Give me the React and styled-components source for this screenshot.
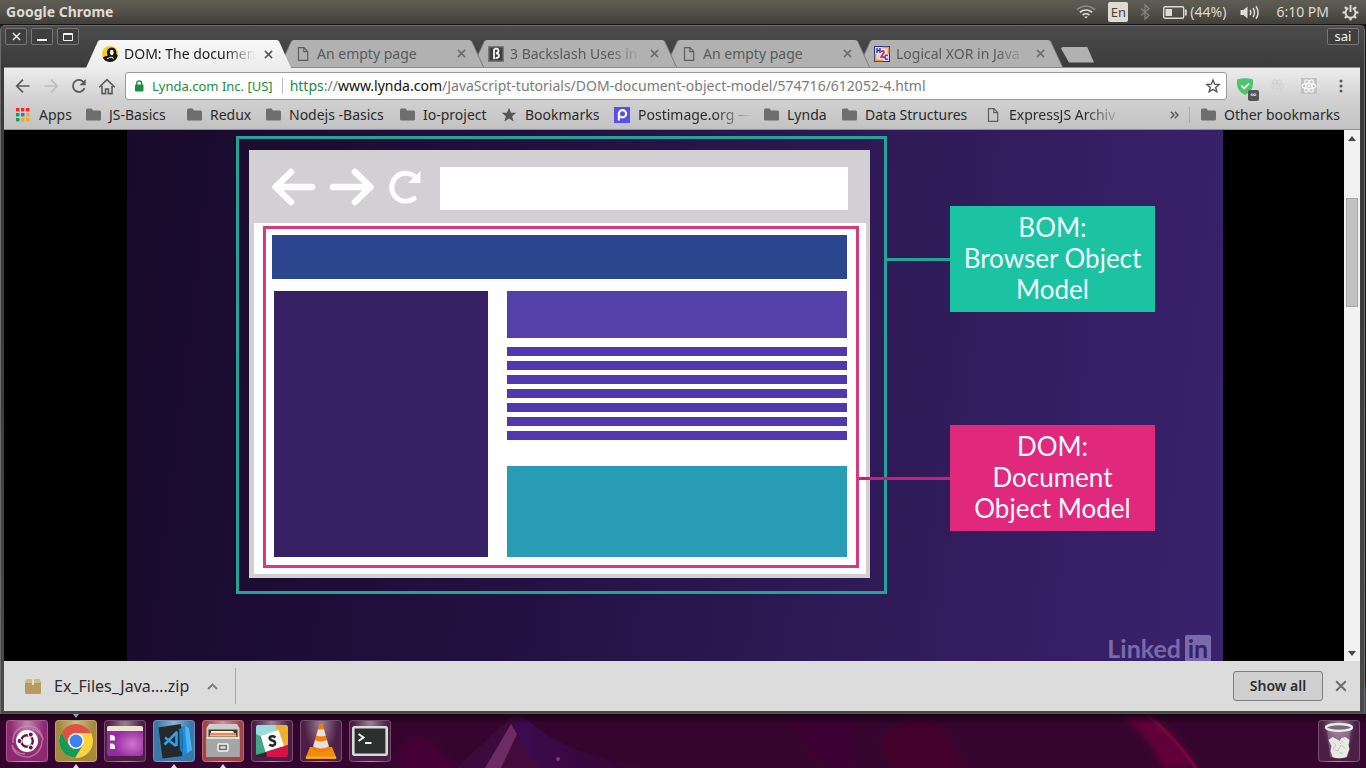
import React from "react";
import styled, { createGlobalStyle, css } from "styled-components";

const GlobalStyle = createGlobalStyle`
  *, *::before, *::after { box-sizing: border-box; }
  html, body { margin: 0; padding: 0; height: 100%; overflow: hidden; background: #37042f; }
  body { font-family: "Noto Sans", "Open Sans", sans-serif; font-size: 14px; line-height: 20px; color: #2d2d2d; }
  button, input { font: inherit; margin: 0; padding: 0; border: 0; background: none; color: inherit; outline: 0; }
  a { color: inherit; text-decoration: none; }
  svg { display: block; flex: none; }
`;

const Desktop = styled.div`
  display: flex;
  flex-direction: column;
  height: 100vh;
`;

/* ---------- system panel ---------- */

const Panel = styled.header`
  display: flex;
  align-items: center;
  justify-content: space-between;
  flex: none;
  height: 24px;
  padding: 0 7px 0 6px;
  background: linear-gradient(#5f5d53, #55534b 40%, #403f3a);
  color: #dfdbd2;
`;

const PanelTitle = styled.strong`
  font-weight: 700;
`;

const Indicators = styled.div`
  display: flex;
  align-items: center;
`;

const Indicator = styled.div`
  display: flex;
  align-items: center;
  gap: 3px;
  margin-left: ${(p) => p.$gap}px;
  white-space: nowrap;
`;

const Language = styled.span`
  width: 20px;
  height: 20px;
  border-radius: 2px;
  background: #dfdbd2;
  color: #45433d;
  font-size: 13px;
  text-align: center;
`;

/* ---------- browser window ---------- */

const Stage = styled.div`
  display: flex;
  flex: 1;
  min-height: 0;
  padding-right: 1px;
  background: linear-gradient(#161616 0, #161616 95%, #0a5c95 97%);
`;

const Window = styled.main`
  display: flex;
  flex-direction: column;
  flex: 1;
  min-width: 0;
  margin-top: 1px;
  padding: 0 4px 2px 3px;
  border: 1px solid #6b6b6b;
  border-bottom-color: #55505a;
  border-radius: 5px 5px 0 0;
  background: linear-gradient(#4c4c4c, #3b3b3b 40px, #3b3b3b 300px, #4a4a4a);
`;

const TabStrip = styled.div`
  display: flex;
  flex: none;
  height: 42px;
  border-bottom: 1px solid #8a8a8a;
`;

const Controls = styled.div`
  display: flex;
  gap: 4px;
  padding: 2px ${(p) => (p.$end ? 1 : 7)}px 0 1px;
`;

const FrameButton = styled.button`
  display: flex;
  align-items: center;
  justify-content: center;
  width: ${(p) => p.$w || 22}px;
  height: 17px;
  border: 1px solid #777;
  border-radius: 2px;
  background: #3f3f3f;
  color: #f2f2f2;
  font-size: 13px;
  line-height: 15px;
`;

const Tabs = styled.nav`
  display: flex;
  flex: 1;
  align-items: flex-end;
  min-width: 0;
`;

const tabShape = css`
  content: "";
  position: absolute;
  inset: 0;
  clip-path: polygon(0 100%, 12px 1px, 14px 0, calc(100% - 14px) 0, calc(100% - 12px) 1px, 100% 100%);
`;

const Tab = styled.div`
  position: relative;
  z-index: ${(p) => p.$z};
  display: flex;
  align-items: center;
  flex: none;
  width: 205px;
  height: ${(p) => (p.$active ? 28 : 27)}px;
  margin-right: -12px;
  margin-bottom: ${(p) => (p.$active ? -1 : 0)}px;
  padding: 0 18px 0 16px;
  color: ${(p) => (p.$active ? "#1c1c1c" : "#5a5a5a")};

  &::before {
    ${tabShape}
    background: ${(p) => (p.$active ? "#f2f2f2" : "#7d7d7d")};
  }
  &::after {
    ${tabShape}
    left: 1px;
    right: 1px;
    background: ${(p) => (p.$active ? "linear-gradient(#f7f7f7, #ededed)" : "#b1b1b1")};
  }
  > * {
    position: relative;
    z-index: 1;
  }
`;

const TabTitle = styled.a`
  flex: 1;
  min-width: 0;
  margin: 0 8px 0 6px;
  overflow: hidden;
  white-space: nowrap;
  ${(p) =>
    p.$fade &&
    css`
      mask-image: linear-gradient(to right, #000 calc(100% - 32px), transparent);
    `}
`;

const IconButton = styled.button`
  display: flex;
  align-items: center;
  justify-content: center;
  flex: none;
  width: ${(p) => p.$size}px;
  height: ${(p) => p.$size}px;
  color: ${(p) => p.$color || "#5a5a5a"};
`;

const NewTab = styled.button`
  align-self: center;
  width: 33px;
  height: 16px;
  margin: 16px 0 0 10px;
  background: #b1b1b1;
  clip-path: polygon(0 2px, 2px 0, 26px 0, 100% 100%, 8px 100%);
`;

const Chrome = styled.div`
  flex: none;
  border-bottom: 1px solid #8f8f8f;
  background: linear-gradient(#ededed, #d2d2d2 50%, #c2c2c2);
`;

const Toolbar = styled.div`
  display: flex;
  align-items: center;
  height: 36px;
  padding: 0 3px 0 5px;
`;

const Address = styled.form`
  display: flex;
  align-items: center;
  flex: 1;
  min-width: 0;
  height: 28px;
  margin: 0 2px 0 4px;
  padding: 0 5px 0 8px;
  border: 1px solid #9b9b9b;
  border-radius: 3px;
  background: #fff;
  white-space: nowrap;
`;

const Identity = styled.span`
  margin: 0 7px 0 8px;
  padding-right: 9px;
  border-right: 1px solid #bdbdbd;
  color: #1c8c45;
  font-size: 13px;
  line-height: 16px;
`;

const UrlPart = styled.span`
  color: ${(p) => p.$color};
`;

const UrlInput = styled.input`
  flex: 1;
  min-width: 0;
  color: #7b7b7b;
`;

const Shield = styled.span`
  position: relative;
  display: flex;
`;

const Badge = styled.span`
  position: absolute;
  right: -6px;
  bottom: -6px;
  width: 11px;
  height: 11px;
  border-radius: 2px;
  background: #555;
  color: #fff;
  font-size: 9px;
  line-height: 10px;
  text-align: center;
`;

const Bookmarks = styled.nav`
  display: flex;
  align-items: center;
  height: 25px;
  padding: 0 16px 4px 11px;
`;

const Bookmark = styled.a`
  display: flex;
  align-items: center;
  flex: none;
  gap: 8px;
  width: ${(p) => p.$w}px;
  white-space: nowrap;
  color: #2b2b2b;

  span {
    ${(p) =>
      p.$fade &&
      css`
        width: 114px;
        overflow: hidden;
        mask-image: linear-gradient(to right, #000 calc(100% - 38px), transparent);
      `}
  }
`;

const IconSlot = styled.i`
  display: flex;
  justify-content: center;
  flex: none;
  width: 16px;
`;

const BookmarkEnd = styled.div`
  display: flex;
  align-items: center;
  gap: 10px;
  margin-left: auto;
`;

const Divider = styled.i`
  width: 1px;
  height: ${(p) => p.$h}px;
  background: #a9a9a9;
`;

/* ---------- page content ---------- */

const Viewport = styled.section`
  display: flex;
  flex: 1;
  min-height: 0;
  overflow: hidden;
  background: #000;
`;

const Player = styled.div`
  flex: 1;
  min-width: 0;
  padding: 0 121px 0 123px;
  overflow: hidden;
`;

const Slide = styled.div`
  position: relative;
  display: flex;
  justify-content: space-between;
  height: 616px;
  padding: 6px 68px 0 109px;
  background: linear-gradient(97deg, #180a2a, #221040 35%, #2e1a56 65%, #3b226e);
`;

const BomFrame = styled.div`
  width: 651px;
  height: 458px;
  padding: 11px 14px 13px 10px;
  border: 3px solid #22a596;
`;

const MockBrowser = styled.div`
  display: flex;
  flex-direction: column;
  height: 100%;
  padding: 0 4px 4px 5px;
  background: #d2d0d2;
`;

const MockBar = styled.div`
  display: flex;
  align-items: center;
  height: 73px;
  padding: 3px 18px 0 17px;
`;

const MockUrl = styled.div`
  flex: 1;
  height: 43px;
  margin-left: 13px;
  background: #fff;
`;

const MockPage = styled.div`
  flex: 1;
  padding: 3px 7px 6px 9px;
  background: #fff;
`;

const DomFrame = styled.div`
  display: flex;
  flex-direction: column;
  gap: 12px;
  height: 100%;
  padding: 6px 9px 8px 6px;
  border: 3px solid #d8397e;
`;

const MockHeader = styled.div`
  flex: none;
  height: 44px;
  background: #2b458f;
`;

const MockColumns = styled.div`
  display: flex;
  flex: 1;
  gap: 19px;
  padding-left: 2px;
`;

const MockAside = styled.div`
  width: 214px;
  background: #371f63;
`;

const MockArticle = styled.div`
  display: flex;
  flex-direction: column;
  flex: 1;
  justify-content: space-between;
`;

const MockBlock = styled.div`
  height: ${(p) => p.$h}px;
  background: ${(p) => p.$color};
`;

const MockLines = styled.div`
  display: grid;
  gap: 5px;
  margin-bottom: 18px;
`;

const Callouts = styled.div`
  display: flex;
  flex-direction: column;
  gap: 113px;
  width: 205px;
  padding-top: 70px;
`;

const Callout = styled.div`
  position: relative;
  height: 106px;
  padding-top: 6px;
  background: ${(p) => p.$color};
  color: #f1faff;
  font-family: Lato, sans-serif;
  font-size: 26px;
  line-height: 31px;
  text-align: center;

  &::before {
    content: "";
    position: absolute;
    top: 52px;
    right: 100%;
    width: ${(p) => p.$reach}px;
    height: 3px;
    background: ${(p) => p.$line};
  }
`;

const Watermark = styled.div`
  position: absolute;
  top: 505px;
  right: 12px;
  display: flex;
  align-items: center;
  gap: 4px;
  color: #7b6aa9;
  font-family: Lato, sans-serif;
  font-size: 25px;
  font-weight: 700;
  line-height: 27px;
`;

const WatermarkBox = styled.span`
  width: 26px;
  height: 27px;
  border-radius: 2px;
  background: #7b6aa9;
  color: #38206c;
  text-align: center;
`;

const Scrollbar = styled.div`
  display: flex;
  flex-direction: column;
  align-items: center;
  flex: none;
  width: 16px;
  padding: 6px 0 5px;
  background: #f1f1f1;
`;

const Thumb = styled.div`
  width: 12px;
  height: 109px;
  margin: 57px 0 auto;
  border: 1px solid #a8a8a8;
  background: #c1c1c1;
`;

/* ---------- downloads shelf ---------- */

const Shelf = styled.footer`
  display: flex;
  align-items: center;
  flex: none;
  height: 50px;
  padding: 0 12px 0 21px;
  background: #dcdcdc;
  font-size: 16px;
`;

const Download = styled.a`
  display: flex;
  align-items: center;
  gap: 13px;
  width: 164px;
  white-space: nowrap;
`;

const ShowAll = styled.button`
  width: 90px;
  height: 30px;
  margin-left: auto;
  margin-right: 11px;
  border: 1px solid #7e7e7e;
  border-radius: 3px;
  background: #cfcfcf;
  font-size: 14px;
  font-weight: 600;
`;

/* ---------- launcher ---------- */

const Dock = styled.nav`
  position: relative;
  display: flex;
  align-items: center;
  flex: none;
  gap: 7px;
  height: 54px;
  padding: 0 6px;
  overflow: hidden;
  background: #36052f;
`;

const Wallpaper = styled.svg`
  position: absolute;
  inset: 0;
  width: 100%;
  height: 100%;
`;

const Launcher = styled.button`
  position: relative;
  display: flex;
  align-items: center;
  justify-content: center;
  flex: none;
  width: 42px;
  height: 42px;
  border-radius: 4px;
  border: 1px solid rgba(255, 255, 255, 0.22);
  background: radial-gradient(ellipse at 50% 0, rgba(255, 255, 255, 0.45), transparent 60%), ${(p) => p.$bg || "rgba(120,80,115,.35)"};
  ${(p) => p.$last && "margin-left: auto;"}

  ${(p) =>
    p.$running &&
    css`
      &::after {
        content: "";
        position: absolute;
        left: 17px;
        bottom: -7px;
        border: 3px solid transparent;
        border-bottom: 4px solid #e2dfe2;
        border-top: 0;
      }
    `}
  ${(p) =>
    p.$focused &&
    css`
      &::before {
        content: "";
        position: absolute;
        left: 17px;
        top: -7px;
        border: 3px solid transparent;
        border-top: 4px solid #a49aa2;
        border-bottom: 0;
      }
    `}
`;

/* ---------- icons ---------- */

const Cross = ({ size = 10, weight = 1.5 }) => (
  <svg width={size} height={size} viewBox="0 0 10 10" stroke="currentColor" strokeWidth={weight}>
    <path d="M1 1l8 8M9 1L1 9" />
  </svg>
);

const Folder = () => (
  <svg width="15" height="13" viewBox="0 0 15 13">
    <path d="M1.500 .5h4l1.500 2h6.500q1.500 0 1.500 1.500v7q0 1.500-1.500 1.500h-12Q0 12.500 0 11V2Q0 .5 1.500 .5z" fill="#6e6e6e" />
  </svg>
);

const PageIcon = () => (
  <svg width="16" height="16" viewBox="0 0 16 16" fill="none" stroke="#5e5e5e" strokeWidth="1.200">
    <path d="M3.500 1.700h5.500l3.700 3.700v8.900h-9.200zM8.800 2v3.600h3.600" />
  </svg>
);

const AppsIcon = () => (
  <svg width="14" height="14" viewBox="0 0 14 14">
    {["#f22", "#f22", "#f22", "#1a9c4c", "#3f6de8", "#f7a91e", "#1a9c4c", "#f7a91e", "#f7a91e"].map((c, i) => (
      <rect key={i} x={(i % 3) * 5} y={Math.floor(i / 3) * 5} width="3.400" height="3.400" fill={c} />
    ))}
  </svg>
);

const StarSolid = () => (
  <svg width="16" height="16" viewBox="0 0 16 16">
    <path d="M8 .8l2 5h5.300l-4.200 3.400 1.500 5.300L8 11.400l-4.600 3.100 1.500-5.300L.7 5.800H6z" fill="#555" />
  </svg>
);

const StarOutline = () => (
  <svg width="16" height="16" viewBox="0 0 16 16" fill="none" stroke="#555" strokeWidth="1.400">
    <path d="M8 2l1.700 4.200 4.400.3-3.400 2.900 1.100 4.400L8 11.400l-3.800 2.400 1.100-4.400L1.900 6.500l4.400-.3z" />
  </svg>
);

const PostIcon = () => (
  <svg width="16" height="16" viewBox="0 0 16 16">
    <rect width="16" height="16" fill="#5450e8" />
    <circle cx="8.500" cy="6.800" r="3.600" fill="none" stroke="#fff" strokeWidth="2.200" />
    <path d="M3.800 6.500h2.200v7h-2.200z" fill="#fff" />
  </svg>
);

const LyndaIcon = () => (
  <svg width="16" height="16" viewBox="0 0 16 16">
    <circle cx="8" cy="8" r="8" fill="#f5cf1c" />
    <path d="M.8 11.500q3-2 5-1.700Q4 6 6 3.300q2.500-2.800 6-1.300 3 2.500 2.300 6l1.400 1.600Q14.500 16 8 16 2.500 15.500 .8 11.500z" fill="#17150f" />
    <path d="M8.200 4.500Q9.800 3 11.300 4.500q.8 2-.3 4.200-1.700 1.300-2.700-.5-.9-2-.1-3.700z" fill="#fff7e5" />
    <path d="M5 12.800q3-2 5.500-1.600l.8 2" stroke="#eee" fill="none" />
  </svg>
);

const BackslashIcon = () => (
  <svg width="16" height="16" viewBox="0 0 16 16">
    <rect width="16" height="16" fill="#3e3e3e" />
    <rect width="16" height="16" fill="none" stroke="#777" strokeWidth="3" />
    <path d="M6 13.300V4.500q0-1.800 2-1.800 2.500 0 2.500 2T8 7.300q3 .2 3 2.500t-3.500 2.300" fill="none" stroke="#fff" strokeWidth="1.700" />
  </svg>
);

const LogicIcon = () => (
  <svg width="16" height="16" viewBox="0 0 16 16" fill="none">
    <rect x=".5" y=".5" width="15" height="15" fill="#e8d2ea" stroke="#29337c" />
    <path d="M1.500 8v6.500H9M14.500 8V1.500H9" stroke="#f09a27" strokeWidth="1.500" />
    <path d="M3 2v5M6 2v5M3 4.500h3" stroke="#22319c" strokeWidth="1.300" />
    <path d="M7 5.500q3-1.500 3 1L7 11h4" stroke="#c32424" strokeWidth="1.400" />
    <path d="M14 9.500q-3-1-3 1.800t3 1.800" stroke="#2a52c8" strokeWidth="1.500" />
  </svg>
);

const Arrow = ({ flip }) => (
  <svg width="16" height="16" viewBox="0 0 16 16" fill="none" stroke="currentColor" strokeWidth="1.700" transform={flip ? "scale(-1 1)" : undefined}>
    <path d="M14.500 8H2M8 1.700L1.700 8 8 14.300" />
  </svg>
);

const Reload = () => (
  <svg width="16" height="16" viewBox="0 0 16 16">
    <path d="M13.500 10.200A6 6 0 1 1 12.200 3.700" fill="none" stroke="currentColor" strokeWidth="1.800" />
    <path d="M14.700 1v6.200H8.500z" fill="currentColor" />
  </svg>
);

const Home = () => (
  <svg width="18" height="17" viewBox="0 0 18 17" fill="none" stroke="currentColor" strokeWidth="1.600">
    <path d="M1.200 9.300L9 1.600l7.800 7.700M4 8v7.600h3.600v-4.600h2.800v4.600H14V8" />
  </svg>
);

const Lock = () => (
  <svg width="10" height="12" viewBox="0 0 10 12">
    <rect x="1" y="4.500" width="8.500" height="7" rx="1" fill="#1c8c45" />
    <path d="M2.700 5V3.300a2.500 2.500 0 0 1 5 0V5" fill="none" stroke="#1c8c45" strokeWidth="1.300" />
  </svg>
);

const Atom = ({ bg, color }) => (
  <svg width="16" height="16" viewBox="0 0 16 16">
    <rect width="16" height="16" fill={bg} />
    <g fill="none" stroke={color} strokeWidth="1.200">
      {[0, 60, 120].map((a) => (
        <ellipse key={a} cx="8" cy="8" rx="6.800" ry="2.600" transform={`rotate(${a} 8 8)`} />
      ))}
    </g>
    <circle cx="8" cy="8" r="1.400" fill={color} />
  </svg>
);

const Gear = () => (
  <svg width="17" height="17" viewBox="0 0 17 17" fill="none" stroke="#dfdbd2">
    <path d="M6.300 4.200a5 5 0 1 0 4.400 0" strokeWidth="1.900" />
    <path d="M8.500 1v7" strokeWidth="1.900" />
    {[45, 90, 135, 180, 225, 270, 315].map((a) => (
      <path key={a} d="M8.500 .6v2.400" strokeWidth="2.200" transform={`rotate(${a} 8.500 8.500)`} />
    ))}
  </svg>
);

const UbuntuIcon = () => (
  <svg width="40" height="40" viewBox="0 0 40 40" fill="none">
    <path d="M6 22Q5 6 22 5q12 1 14 14-2-9-11-11M35 19q0 13-13 17Q7 36 5 24q3 9 13 9" stroke="#d292bd" strokeWidth="1.500" opacity=".65" />
    <circle cx="20" cy="20" r="11" fill="#fff" />
    <circle cx="20" cy="20" r="5.800" stroke="#5f1a4c" strokeWidth="2.400" />
    {[60, 180, 300].map((a) => (
      <circle key={a} cx="27.500" cy="20" r="2.500" fill="#5f1a4c" stroke="#fff" transform={`rotate(${a} 20 20)`} />
    ))}
  </svg>
);

const ChromeIcon = () => (
  <svg width="36" height="36" viewBox="0 0 36 36">
    <circle cx="18" cy="18" r="17" fill="#fdd13f" />
    <path d="M3.300 9.500A17 17 0 0 1 32.700 9.500L33 10H18L11 22z" fill="#de5246" />
    <path d="M3.300 9.500A17 17 0 0 0 17 35L25 22 11 22z" fill="#179a57" />
    <circle cx="18" cy="18" r="8" fill="#f4f4f4" />
    <circle cx="18" cy="18" r="6.400" fill="#3f80ee" />
  </svg>
);

const DesktopIcon = () => (
  <svg width="36" height="30" viewBox="0 0 36 30">
    <defs>
      <radialGradient id="shot" cx="70%" cy="60%">
        <stop offset="0" stopColor="#d275c9" />
        <stop offset="1" stopColor="#952aa4" />
      </radialGradient>
    </defs>
    <rect width="36" height="30" rx="2" fill="url(#shot)" />
    <path d="M0 2q0-2 2-2h32q2 0 2 2v3H0z" fill="#e9e7cf" />
    <path d="M3 9h3l2 2v3.500H3zM3 17.500h3l2 2V23H3z" fill="#f8f2f8" />
  </svg>
);

const CodeIcon = () => (
  <svg width="36" height="36" viewBox="0 0 36 36">
    <path d="M24 5l5-2 4 2 3 22-6 4-6 2z" fill="#1f8fdd" />
    <path d="M29 3l4 2 3 22-5 3z" fill="#4bb2f3" />
    <path d="M2.500 4.500L24.500 1 26 6l1 20-1 7-19.500 2.500z" fill="#25292e" />
    <path d="M23 6l3-1 1 26-3-4z" fill="#187fc9" />
    <path d="M9 14.500l11 8.500M8.500 21.500L20.500 9.500V23" fill="none" stroke="#2fa0ea" strokeWidth="2.600" strokeLinejoin="round" />
  </svg>
);

const FilesIcon = () => (
  <svg width="36" height="36" viewBox="0 0 36 36">
    <path d="M4 1h28l2.500 4v29h-33V5z" fill="#cdcdcd" />
    <path d="M3.500 6.500h29v8h-29z" fill="#47372f" />
    <path d="M6 8h22l1 2H6z" fill="#eee" />
    <path d="M5 10h26v3H5z" fill="#ee8a35" />
    <path d="M4.500 12.500h27v1h-27z" fill="#f7e6d0" />
    <path d="M1.500 14h33v20h-33z" fill="#a6a6a6" />
    <path d="M1.500 14h33v2h-33z" fill="#dedede" />
    <rect x="13" y="21" width="10" height="7" rx="1" fill="#777" stroke="#f3f3f3" strokeWidth="1.500" />
    <path d="M15.500 23.500h5v2h-5z" fill="#eee" />
  </svg>
);

const SlackIcon = () => (
  <svg width="32" height="32" viewBox="0 0 32 32">
    <rect width="32" height="32" rx="2" fill="#3b1f34" />
    <path d="M0 2q0-2 2-2h18l2 6L3 12 0 10z" fill="#9adcdc" />
    <path d="M20 0h10q2 0 2 2v18l-6 2L20 4z" fill="#ecb22d" />
    <path d="M0 9l4 2 6 16-10 3z" fill="#3ea989" />
    <path d="M10 27l22-7v10q0 2-2 2H11z" fill="#d9104a" />
    <path d="M4.500 11l18-6 5.500 16-18.500 6z" fill="#fff" />
    <path d="M19.500 12.300q-3-1.800-5.300-.5-1.600 1.800 1.200 3.400 4.500 1 3.500 4-2 2.500-5.700.5" fill="none" stroke="#27242b" strokeWidth="2.600" />
  </svg>
);

const VlcIcon = () => (
  <svg width="34" height="38" viewBox="0 0 34 38">
    <path d="M6 25h22l4.500 11q0 1-1.500 1H3q-1.500 0-1.500-1z" fill="#f28c0c" />
    <path d="M15.200 2.500q1.800-1.500 3.600 0l7 25q-8.800 5-17.600 0z" fill="#f47c0b" />
    <path d="M14 7.500h6l1.700 6q-4.700 2-9.400 0zM11.200 18q5.800 3 11.600 0l2 6.500q-7.800 4-15.600 0z" fill="#e3e3e3" />
    <path d="M2 35.500h30" stroke="#ffb93a" strokeWidth="1.500" />
  </svg>
);

const TerminalIcon = () => (
  <svg width="36" height="30" viewBox="0 0 36 30">
    <rect x="1.300" y="1.300" width="33.400" height="27.400" rx="1" fill="#2b2f2e" stroke="#dadada" strokeWidth="2.600" />
    <path d="M6.500 8l5 3.500-5 3.500M13 17h6.500" fill="none" stroke="#f4f4f4" strokeWidth="2" />
  </svg>
);

const TrashIcon = () => (
  <svg width="32" height="38" viewBox="0 0 32 38">
    <path d="M4 6l3 29q9 3 18 0l3-29z" fill="#cfc3cd" opacity=".3" />
    <ellipse cx="16" cy="5.500" rx="13" ry="3.300" fill="#7b6877" stroke="#ececec" strokeWidth="2.200" />
    <path d="M5.500 18l4-3 4 2 3 2 2-3 4-1 4 3-1 5 1 4-3 8q-7.500 2.500-14 0l-2-6 1-5z" fill="#e9e9e6" />
    <path d="M10 20l3 3-3 4 5 2 3-6 4 3M16 30l4 2M20 19l-3 3" fill="none" stroke="#c6c5c1" />
  </svg>
);

const TriangleIcon = ({ down }) => (
  <svg width="8" height="5" viewBox="0 0 8 5">
    <path d={down ? "M0 0h8L4 5z" : "M0 5h8L4 0z"} fill="#4a4a4a" />
  </svg>
);

/* ---------- data ---------- */

const tabs = [
  { title: "DOM: The documen", icon: <LyndaIcon />, fade: true },
  { title: "An empty page", icon: <PageIcon /> },
  { title: "3 Backslash Uses in", icon: <BackslashIcon />, fade: true },
  { title: "An empty page", icon: <PageIcon /> },
  { title: "Logical XOR in Java", icon: <LogicIcon />, fade: true },
];

const bookmarks = [
  { label: "Apps", icon: <AppsIcon />, w: 70 },
  { label: "JS-Basics", icon: <Folder />, w: 101 },
  { label: "Redux", icon: <Folder />, w: 79 },
  { label: "Nodejs -Basics", icon: <Folder />, w: 134 },
  { label: "Io-project", icon: <Folder />, w: 102 },
  { label: "Bookmarks", icon: <StarSolid />, w: 113 },
  { label: "Postimage.org —", icon: <PostIcon />, w: 149, fade: true },
  { label: "Lynda", icon: <Folder />, w: 78 },
  { label: "Data Structures", icon: <Folder />, w: 144 },
  { label: "ExpressJS Archiv", icon: <PageIcon />, w: 138, fade: true },
];

const launchers = [
  { name: "Search", icon: <UbuntuIcon />, bg: "#8f2a70" },
  { name: "Chrome", icon: <ChromeIcon />, bg: "#a68a3c", running: true, focused: true },
  { name: "Desktop", icon: <DesktopIcon /> },
  { name: "Code", icon: <CodeIcon />, bg: "#3a78a8", running: true },
  { name: "Files", icon: <FilesIcon />, bg: "#a0454a", running: true },
  { name: "Slack", icon: <SlackIcon /> },
  { name: "VLC", icon: <VlcIcon /> },
  { name: "Terminal", icon: <TerminalIcon /> },
];

export default function App() {
  return (
    <Desktop>
      <GlobalStyle />
      <Panel>
        <PanelTitle>Google Chrome</PanelTitle>
        <Indicators>
          <Indicator $gap={0}>
            <svg width="20" height="14" viewBox="0 0 20 14" fill="none" strokeWidth="1.700">
              <path d="M1 4.500q9-7 18 0" stroke="#8f8c84" />
              <path d="M3.800 7.300q6.200-4.600 12.400 0M6.600 10q3.400-2.500 6.800 0" stroke="#dfdbd2" />
              <path d="M8 11.500h4l-2 2z" fill="#dfdbd2" />
            </svg>
          </Indicator>
          <Indicator $gap={12}>
            <Language>En</Language>
          </Indicator>
          <Indicator $gap={12}>
            <svg width="10" height="16" viewBox="0 0 10 16" fill="none" stroke="#85827a" strokeWidth="1.300">
              <path d="M1 4.500l8 7L5 15V1l4 3.500-8 7" />
            </svg>
          </Indicator>
          <Indicator $gap={13}>
            <svg width="24" height="13" viewBox="0 0 24 13">
              <rect x=".7" y=".7" width="20" height="11.600" rx="1.500" fill="none" stroke="#dfdbd2" strokeWidth="1.400" />
              <path d="M2.500 3h6.500v7H2.500zM22 3.500h1.700v6H22z" fill="#dfdbd2" />
            </svg>
            (44%)
          </Indicator>
          <Indicator $gap={14}>
            <svg width="20" height="15" viewBox="0 0 20 15" fill="none" stroke="#dfdbd2" strokeWidth="1.500">
              <path d="M.5 5h3l4-3.500v12L3.500 10h-3z" fill="#dfdbd2" stroke="none" />
              <path d="M10 5q1.800 2.500 0 5M13 3q3 4.500 0 9M16 1.200q4.200 6.300 0 12.600" />
            </svg>
          </Indicator>
          <Indicator $gap={16}>6:10 PM</Indicator>
          <Indicator $gap={13}>
            <Gear />
          </Indicator>
        </Indicators>
      </Panel>

      <Stage>
        <Window>
          <TabStrip>
            <Controls>
              <FrameButton aria-label="Close">
                <Cross size={9} />
              </FrameButton>
              <FrameButton aria-label="Minimize">
                <svg width="10" height="10" viewBox="0 0 10 10">
                  <path d="M0 7h10v2H0z" fill="#f2f2f2" />
                </svg>
              </FrameButton>
              <FrameButton aria-label="Maximize">
                <svg width="10" height="8" viewBox="0 0 10 8" fill="none" stroke="#f2f2f2">
                  <path d="M.5 .5h9v7h-9zM0 1.500h10" />
                </svg>
              </FrameButton>
            </Controls>
            <Tabs>
              {tabs.map((t, i) => (
                <Tab key={i} $active={i === 0} $z={tabs.length - i}>
                  {t.icon}
                  <TabTitle href="#" $fade={t.fade}>
                    {t.title}
                  </TabTitle>
                  <IconButton $size={9} $color={i === 0 ? "#5a5a5a" : "#6c6c6c"} aria-label="Close tab">
                    <Cross size={9} weight={1.7} />
                  </IconButton>
                </Tab>
              ))}
              <NewTab aria-label="New tab" />
            </Tabs>
            <Controls $end>
              <FrameButton $w={32}>sai</FrameButton>
            </Controls>
          </TabStrip>

          <Chrome>
            <Toolbar>
              <IconButton $size={28} aria-label="Back">
                <Arrow />
              </IconButton>
              <IconButton $size={28} $color="#bdbdbd" aria-label="Forward">
                <Arrow flip />
              </IconButton>
              <IconButton $size={28} aria-label="Reload">
                <Reload />
              </IconButton>
              <IconButton $size={28} aria-label="Home">
                <Home />
              </IconButton>
              <Address>
                <Lock />
                <Identity>Lynda.com Inc. [US]</Identity>
                <UrlPart $color="#1c8c45">https</UrlPart>
                <UrlPart $color="#7b7b7b">://</UrlPart>
                <UrlPart $color="#111">www.lynda.com</UrlPart>
                <UrlInput
                  aria-label="Address"
                  defaultValue="/JavaScript-tutorials/DOM-document-object-model/574716/612052-4.html"
                />
                <StarOutline />
              </Address>
              <IconButton $size={32} aria-label="Ad blocker">
                <Shield>
                  <svg width="16" height="17" viewBox="0 0 16 17">
                    <path d="M0 1.500Q8-1 16 1.500v5Q15.500 13 8 17 .5 13 0 6.500z" fill="#4fc46c" />
                    <path d="M4.500 7.500L7.200 10.500 12 5.500" fill="none" stroke="#fff" strokeWidth="1.800" />
                  </svg>
                  <Badge>∞</Badge>
                </Shield>
              </IconButton>
              <IconButton $size={32} aria-label="React tools, inactive">
                <Atom bg="none" color="#d3d3d3" />
              </IconButton>
              <IconButton $size={32} aria-label="React tools">
                <Atom bg="#c3c3c3" color="#f7f7f7" />
              </IconButton>
              <IconButton $size={32} aria-label="Menu">
                <svg width="4" height="14" viewBox="0 0 4 14" fill="#5a5a5a">
                  <circle cx="2" cy="2" r="1.500" />
                  <circle cx="2" cy="7" r="1.500" />
                  <circle cx="2" cy="12" r="1.500" />
                </svg>
              </IconButton>
            </Toolbar>
            <Bookmarks>
              {bookmarks.map((b) => (
                <Bookmark key={b.label} href="#" $w={b.w} $fade={b.fade}>
                  <IconSlot>{b.icon}</IconSlot>
                  <span>{b.label}</span>
                </Bookmark>
              ))}
              <BookmarkEnd>
                <IconButton $size={10} aria-label="More bookmarks">
                  <svg width="9" height="8" viewBox="0 0 9 8" fill="none" stroke="currentColor" strokeWidth="1.500">
                    <path d="M.8 .8L4 4 .8 7.200M4.800 .8L8 4 4.800 7.200" />
                  </svg>
                </IconButton>
                <Divider $h={16} />
                <Bookmark href="#" $w={144}>
                  <IconSlot>
                    <Folder />
                  </IconSlot>
                  <span>Other bookmarks</span>
                </Bookmark>
              </BookmarkEnd>
            </Bookmarks>
          </Chrome>

          <Viewport>
            <Player>
              <Slide>
                <BomFrame>
                  <MockBrowser>
                    <MockBar>
                      <svg width="156" height="46" viewBox="0 0 156 46" fill="none" stroke="#fff" strokeWidth="6.500" strokeLinecap="round" strokeLinejoin="round">
                        <path d="M41 22H5M20 7L4.500 22 20 37" />
                        <path d="M62 22h37M84 7l15.500 15L84 37" />
                        <path d="M143 33.500a14 14 0 1 1 -.5-23" strokeWidth="5" />
                        <path d="M149.500 6v12h-12.500z" fill="#fff" strokeWidth="0" />
                      </svg>
                      <MockUrl />
                    </MockBar>
                    <MockPage>
                      <DomFrame>
                        <MockHeader />
                        <MockColumns>
                          <MockAside />
                          <MockArticle>
                            <MockBlock $h={47} $color="#5341a9" />
                            <MockLines>
                              {Array.from({ length: 7 }, (_, i) => (
                                <MockBlock key={i} $h={9} $color="#5238ae" />
                              ))}
                            </MockLines>
                            <MockBlock $h={91} $color="#289bb5" />
                          </MockArticle>
                        </MockColumns>
                      </DomFrame>
                    </MockPage>
                  </MockBrowser>
                </BomFrame>
                <Callouts>
                  <Callout $color="#1bc3a2" $line="#1fa796" $reach={63}>
                    BOM:
                    <br />
                    Browser Object
                    <br />
                    Model
                  </Callout>
                  <Callout $color="#e0287c" $line="#c81e7c" $reach={91}>
                    DOM:
                    <br />
                    Document
                    <br />
                    Object Model
                  </Callout>
                </Callouts>
                <Watermark>
                  Linked<WatermarkBox>in</WatermarkBox>
                </Watermark>
              </Slide>
            </Player>
            <Scrollbar>
              <TriangleIcon />
              <Thumb />
              <TriangleIcon down />
            </Scrollbar>
          </Viewport>

          <Shelf>
            <Download href="#">
              <svg width="16" height="15" viewBox="0 0 16 15">
                <path d="M2 0h12l2 3v11q0 1-1 1H1q-1 0-1-1V3z" fill="#b39c63" />
                <path d="M2 0h12l2 4H0z" fill="#cdbb87" />
                <path d="M7 0h2v6H7z" fill="#e9dfc0" />
              </svg>
              <span>Ex_Files_Java….zip</span>
            </Download>
            <IconButton $size={46} aria-label="Download options">
              <svg width="11" height="7" viewBox="0 0 11 7" fill="none" stroke="#7a7a7a" strokeWidth="1.900">
                <path d="M1 6l4.500-4.500L10 6" />
              </svg>
            </IconButton>
            <Divider $h={36} />
            <ShowAll>Show all</ShowAll>
            <IconButton $size={14} $color="#6c6c6c" aria-label="Close downloads">
              <Cross size={12} weight={1.6} />
            </IconButton>
          </Shelf>
        </Window>
      </Stage>

      <Dock>
        <Wallpaper viewBox="0 0 1366 54" preserveAspectRatio="none">
          <defs>
            <linearGradient id="shade" x1="0" y1="0" x2="0" y2="1">
              <stop offset="0" stopColor="#1c0218" />
              <stop offset="1" stopColor="#1c0218" stopOpacity="0" />
            </linearGradient>
            <linearGradient id="violet" x1="0" y1="0" x2="1" y2="0">
              <stop offset="0" stopColor="#3c0a50" />
              <stop offset="1" stopColor="#36052f" />
            </linearGradient>
            <filter id="haze">
              <feGaussianBlur stdDeviation="3" />
            </filter>
          </defs>
          <path d="M395 60q5-40 22-36 25 6 40 36z" fill="#450535" filter="url(#haze)" />
          <path d="M510 4l-60 56h85l-10-46z" fill="#3c0b3c" />
          <path d="M512 8l-27 46h55q-20-24-26-46z" fill="#450a3c" />
          <path d="M511 10l-26 44h16l16-34z" fill="#6a2c62" />
          <path d="M512 2q6 32 28 52h110q-90-12-128-54z" fill="url(#violet)" />
          <path d="M790 0q10 34 40 54h20q4-30 8-54z" fill="#3d0530" filter="url(#haze)" />
          <path d="M880 28q20-26 45-20t40 46h-70z" fill="#43062c" filter="url(#haze)" />
          <path d="M1118 0q34 24 44 54h34q-16-32-48-54z" fill="#62053a" filter="url(#haze)" />
          <path d="M1146 0q28 22 50 54" stroke="#7c0a3a" strokeWidth="3" fill="none" opacity=".8" />
          <circle cx="558" cy="45" r="2" fill="#8b2f86" />
          <rect width="1366" height="10" fill="url(#shade)" />
        </Wallpaper>
        {launchers.map((l) => (
          <Launcher key={l.name} aria-label={l.name} $bg={l.bg} $running={l.running} $focused={l.focused}>
            {l.icon}
          </Launcher>
        ))}
        <Launcher aria-label="Trash" $last>
          <TrashIcon />
        </Launcher>
      </Dock>
    </Desktop>
  );
}
